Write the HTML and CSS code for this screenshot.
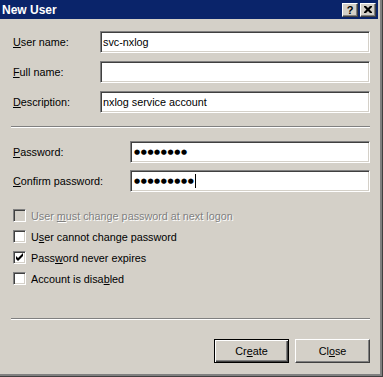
FILE: index.html
```html
<!DOCTYPE html>
<html lang="en">
<head>
    <meta charset="UTF-8">
    <meta name="viewport" content="width=device-width, initial-scale=1.0">
    <title>New User</title>
    <link rel="stylesheet" href="styles.css">
</head>
<body>
    <div class="window">
        <div class="titlebar">
            <span class="title">New User</span>
            <div class="caption-buttons">
                <span class="cap-btn help">?</span>
                <span class="cap-btn close">
                    <svg width="8" height="7" viewBox="0 0 8 7">
                        <path d="M0 0h2l2 2l2 -2h2v1l-2.5 2.5l2.5 2.5v1h-2l-2 -2l-2 2h-2v-1l2.5 -2.5l-2.5 -2.5z" fill="#000"/>
                    </svg>
                </span>
            </div>
        </div>

        <div class="content">
            <div class="form-grid names">
                <label class="label"><u>U</u>ser name:</label>
                <div class="field">svc-nxlog</div>
                <label class="label"><u>F</u>ull name:</label>
                <div class="field"></div>
                <label class="label"><u>D</u>escription:</label>
                <div class="field">nxlog service account</div>
            </div>

            <div class="separator"></div>

            <div class="form-grid passwords">
                <label class="label"><u>P</u>assword:</label>
                <div class="field masked">●●●●●●●●</div>
                <label class="label"><u>C</u>onfirm password:</label>
                <div class="field masked">●●●●●●●●●<span class="caret"></span></div>
            </div>

            <div class="checks">
                <div class="check disabled">
                    <span class="box"></span>
                    <span>User <u>m</u>ust change password at next logon</span>
                </div>
                <div class="check">
                    <span class="box"></span>
                    <span>U<u>s</u>er cannot change password</span>
                </div>
                <div class="check">
                    <span class="box">
                        <svg width="9" height="9" viewBox="0 0 9 9">
                            <polygon points="1,3 3,5 8,0 8,3 3,8 1,6" fill="#000"/>
                        </svg>
                    </span>
                    <span>Pass<u>w</u>ord never expires</span>
                </div>
                <div class="check">
                    <span class="box"></span>
                    <span>Account is disa<u>b</u>led</span>
                </div>
            </div>

            <div class="separator bottom"></div>

            <div class="actions">
                <button class="btn default">Cr<u>e</u>ate</button>
                <button class="btn">Cl<u>o</u>se</button>
            </div>
        </div>
    </div>
</body>
</html>
```

FILE: styles.css
```css
body {
    margin: 0;
    padding: 0;
    font-family: "Liberation Sans", Arial, sans-serif;
    font-size: 10.8px;
    color: #000;
    background-color: #d4d0c8;
}
u {
    text-decoration: underline;
    text-underline-offset: 1px;
}
.window {
    width: 383px;
    height: 377px;
    box-sizing: border-box;
    padding-right: 4px;
    background-color: #d4d0c8;
    border-right: 1px solid #404040;
    border-bottom: 1px solid #404040;
    box-shadow: inset -2px -2px 0 #808080;
}
.titlebar {
    height: 19px;
    background-color: #0a246a;
    display: flex;
    align-items: center;
    justify-content: space-between;
    padding: 0 2px 0 2px;
}
.title {
    color: #fff;
    font-weight: bold;
    font-size: 12px;
}
.caption-buttons {
    display: flex;
    gap: 2px;
}
.cap-btn {
    width: 16px;
    height: 14px;
    box-sizing: border-box;
    background-color: #d4d0c8;
    border-top: 1px solid #fff;
    border-left: 1px solid #fff;
    border-right: 1px solid #404040;
    border-bottom: 1px solid #404040;
    box-shadow: inset -1px -1px 0 #808080;
    display: flex;
    align-items: center;
    justify-content: center;
}
.cap-btn.help {
    font-weight: bold;
    font-size: 11px;
    line-height: 12px;
}
.content {
    padding: 12px 8px 0 11px;
}
.form-grid {
    display: grid;
    margin-left: 2px;
    align-items: center;
}
.names {
    grid-template-columns: 87px 270px;
    grid-auto-rows: 22px;
    row-gap: 8px;
}
.passwords {
    margin-top: 13px;
    grid-template-columns: 117px 240px;
    grid-auto-rows: 22px;
    row-gap: 7px;
}
.field {
    height: 22px;
    box-sizing: border-box;
    background-color: #fff;
    border-top: 1px solid #808080;
    border-left: 1px solid #808080;
    border-right: 1px solid #fff;
    border-bottom: 1px solid #fff;
    box-shadow: inset 1px 1px 0 #404040, inset -1px -1px 0 #d4d0c8;
    padding: 0 2px;
    display: flex;
    align-items: center;
    white-space: nowrap;
}
.masked {
    font-family: "DejaVu Sans", sans-serif;
    font-size: 7px;
    letter-spacing: 0.6px;
    padding-left: 3px;
}
.caret {
    display: inline-block;
    width: 1px;
    height: 14px;
    background-color: #000;
    margin-left: 1px;
}
.separator {
    margin-top: 13px;
    height: 1px;
    background-color: #808080;
    border-bottom: 1px solid #fff;
}
.separator.bottom {
    margin-top: 29px;
}
.checks {
    margin-top: 13px;
    margin-left: 2px;
}
.check {
    height: 21px;
    display: flex;
    align-items: center;
    gap: 5px;
}
.box {
    width: 13px;
    height: 13px;
    box-sizing: border-box;
    background-color: #fff;
    border-top: 1px solid #808080;
    border-left: 1px solid #808080;
    border-right: 1px solid #fff;
    border-bottom: 1px solid #fff;
    box-shadow: inset 1px 1px 0 #404040, inset -1px -1px 0 #d4d0c8;
    padding: 1px;
    display: flex;
}
.check.disabled {
    color: #808080;
    text-shadow: 1px 1px 0 #fff;
}
.check.disabled .box {
    background-color: #d4d0c8;
}
.actions {
    margin-top: 19px;
    display: flex;
    justify-content: flex-end;
    gap: 6px;
}
.btn {
    width: 75px;
    height: 24px;
    box-sizing: border-box;
    font-family: "Liberation Sans", Arial, sans-serif;
    font-size: 10.8px;
    color: #000;
    background-color: #d4d0c8;
    border-top: 1px solid #fff;
    border-left: 1px solid #fff;
    border-right: 1px solid #404040;
    border-bottom: 1px solid #404040;
    box-shadow: inset -1px -1px 0 #808080;
    padding: 0;
}
.btn.default {
    border: 1px solid #000;
    box-shadow: inset 1px 1px 0 #fff, inset -1px -1px 0 #404040, inset -2px -2px 0 #808080;
}
```
